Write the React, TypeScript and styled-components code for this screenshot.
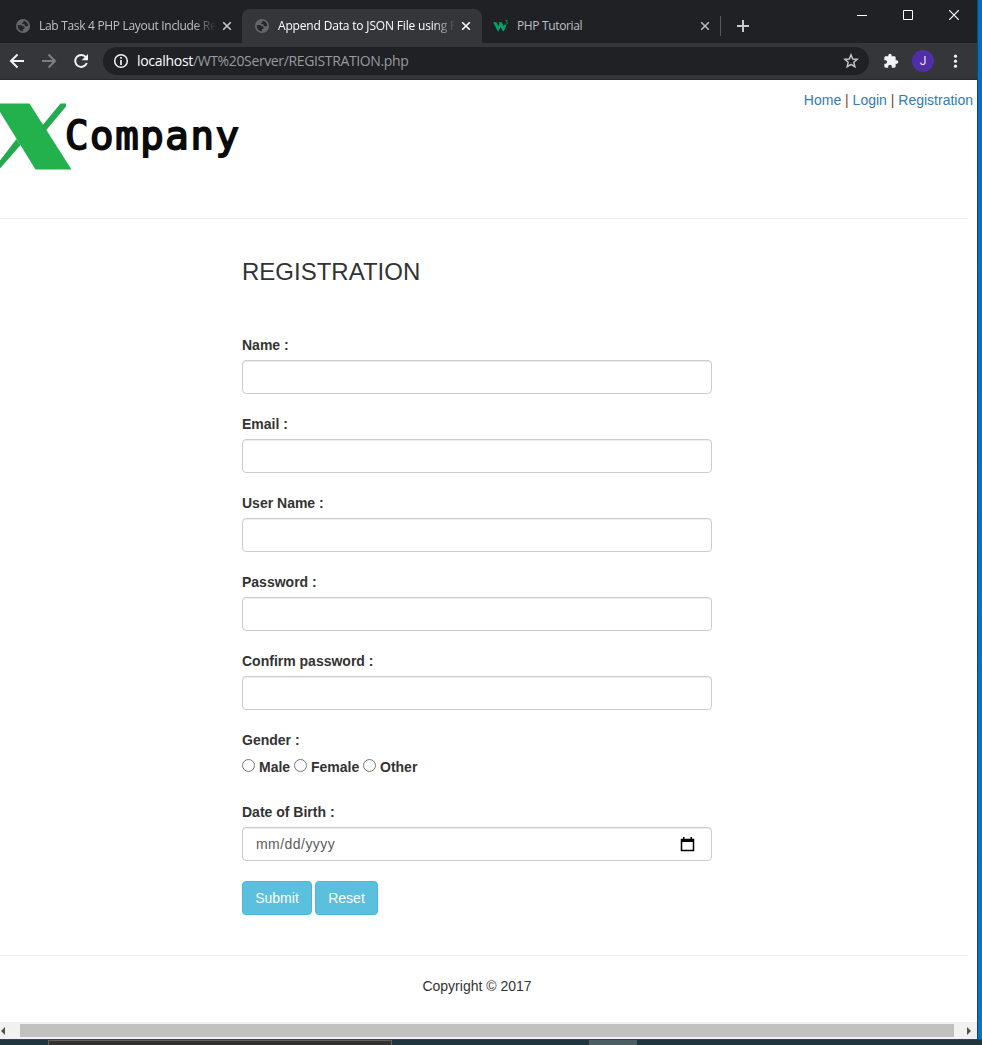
import React from "react";
import styled, { createGlobalStyle } from "styled-components";

const Global = createGlobalStyle`
  * { box-sizing: border-box; }
  html, body { margin: 0; padding: 0; overflow: hidden; }
  body { font-family: "Liberation Sans", Arial, sans-serif; font-size: 14px; line-height: 20px; color: #333; }
`;

const Desktop = styled.div`
  width: 982px;
  height: 1045px;
  display: flex;
  flex-direction: column;
  background: #1f363e;
  overflow: hidden;
`;
const Upper = styled.div`
  display: flex;
  height: 1039px;
`;
const Wallpaper = styled.div`
  width: 5px;
  border-left: 1px solid #1b4558;
  background: linear-gradient(#006fca, #0077c8);
`;
const Browser = styled.div`
  width: 977px;
  display: flex;
  flex-direction: column;
  background: #fff;
`;

const TabStrip = styled.div`
  height: 43px;
  display: flex;
  background: #202124;
`;
const Tab = styled.div<{ $active?: boolean; $width: number; $pad: number; $end?: number }>`
  width: ${(p) => p.$width}px;
  height: 34px;
  margin-top: 9px;
  padding-left: ${(p) => p.$pad}px;
  padding-right: ${(p) => p.$end ?? 10}px;
  display: flex;
  align-items: center;
  border-radius: 8px 8px 0 0;
  background: ${(p) => (p.$active ? "#35363a" : "#202124")};
  color: ${(p) => (p.$active ? "#fff" : "#bdc1c6")};
  font: 12px/16px "Open Sans", "Noto Sans", sans-serif;
  svg { flex: none; }
`;
const TabTitle = styled.span<{ $spacing: number; $fade?: boolean }>`
  flex: 1;
  min-width: 0;
  margin-left: 9px;
  margin-right: 6px;
  white-space: nowrap;
  letter-spacing: ${(p) => p.$spacing}px;
  ${(p) => p.$fade && "mask-image: linear-gradient(to right, #000 calc(100% - 22px), transparent);"}
`;
const TabDivider = styled.div`
  width: 1px;
  height: 20px;
  margin-top: 16px;
  background: #55575b;
`;
const NewTab = styled.div`
  margin: 20px 0 0 16px;
  height: 12px;
  line-height: 0;
`;
const WindowButtons = styled.div`
  margin-left: auto;
  padding: 10px 18px 0 0;
  display: flex;
  gap: 36px;
  height: 20px;
`;

const Toolbar = styled.div`
  height: 37px;
  display: flex;
  align-items: center;
  background: #35363a;
  border-bottom: 1px solid #28292c;
  padding-left: 9px;
  svg { flex: none; }
`;
const NavIcons = styled.div`
  display: flex;
  gap: 16px;
  width: 94px;
`;
const AddressBar = styled.div`
  width: 766px;
  height: 28px;
  border-radius: 14px;
  background: #202124;
  display: flex;
  align-items: center;
  padding: 0 10px;
`;
const Url = styled.span`
  flex: 1;
  margin-left: 8px;
  font: 14px/20px "Open Sans", "Noto Sans", sans-serif;
  letter-spacing: -0.37px;
  color: #969ba1;
  b { font-weight: 400; color: #fff; letter-spacing: -0.3px; }
`;
const Avatar = styled.div`
  width: 22px;
  height: 22px;
  margin: 0 13px 0 13px;
  border-radius: 50%;
  background: #512da8;
  color: #e8e3f5;
  text-align: center;
  font: 12px/22px Roboto, sans-serif;
`;
const Extensions = styled.svg`
  margin-left: 14px;
`;

const Page = styled.main`
  height: 942px;
  display: flex;
  flex-direction: column;
`;
const Header = styled.header`
  height: 138px;
  display: flex;
  justify-content: space-between;
  align-items: flex-start;
`;
const Brand = styled.div`
  display: flex;
  padding-top: 20px;
`;
const BrandName = styled.span`
  margin: 13px 0 0 -9px;
  font: 39px/46px "DejaVu Sans Mono", monospace;
  letter-spacing: 1.6px;
  -webkit-text-stroke: 1.8px #0a0a0a;
  color: #0a0a0a;
`;
const Links = styled.nav`
  padding: 10px 4px 0 0;
  white-space: pre;
  color: #8a3d2a;
  a { color: #337ab7; text-decoration: none; }
`;
const Rule = styled.hr`
  width: 968px;
  height: 1px;
  margin: 0;
  border: 0;
  background: #eee;
`;
const Form = styled.form`
  width: 470px;
  height: 736px;
  margin-left: 242px;
  padding-top: 40px;
`;
const Title = styled.h3`
  margin: 0 0 50px;
  font-size: 24px;
  line-height: 26px;
  font-weight: 400;
`;
const Group = styled.div<{ $gap?: number }>`
  margin-bottom: ${(p) => p.$gap ?? 20}px;
`;
const Label = styled.label`
  display: block;
  height: 20px;
  margin-bottom: 5px;
  font-weight: 700;
`;
const Input = styled.input`
  display: block;
  width: 100%;
  height: 34px;
  padding: 6px 12px;
  border: 1px solid #ccc;
  border-radius: 4px;
  background: #fff;
  box-shadow: inset 0 1px 1px rgba(0, 0, 0, 0.075);
`;
const DateBox = styled.div`
  display: flex;
  align-items: center;
  justify-content: space-between;
  height: 34px;
  padding: 0 16px 0 13px;
  border: 1px solid #ccc;
  border-radius: 4px;
  box-shadow: inset 0 1px 1px rgba(0, 0, 0, 0.075);
  color: #5c5c5c;
  letter-spacing: 0.45px;
`;
const Radios = styled.div`
  display: flex;
  height: 20px;
  margin-top: 7px;
  font-weight: 700;
`;
const Radio = styled.label<{ $width: number }>`
  display: flex;
  width: ${(p) => p.$width}px;
`;
const Circle = styled.span`
  width: 13px;
  height: 13px;
  margin: 2px 4px 0 0;
  border: 1px solid #767676;
  border-radius: 50%;
`;
const Actions = styled.div`
  display: flex;
  gap: 3px;
`;
const Button = styled.button<{ $width: number }>`
  width: ${(p) => p.$width}px;
  height: 34px;
  padding: 0;
  border: 1px solid #46b8da;
  border-radius: 4px;
  background: #5bc0de;
  color: #fff;
  font: 14px/20px "Liberation Sans", Arial, sans-serif;
`;
const Footer = styled.footer`
  width: 954px;
  padding-top: 20px;
  text-align: center;
`;

const ScrollBar = styled.div`
  height: 17px;
  display: flex;
  align-items: center;
  justify-content: space-between;
  padding: 0 6px 0 1px;
  background: #f1f1f1;
`;
const Thumb = styled.div`
  width: 934px;
  height: 13px;
  margin-left: 15px;
  margin-right: auto;
  background: #c1c1c1;
`;
const Taskbar = styled.div`
  height: 6px;
  display: flex;
  padding-left: 48px;
  border-top: 1px solid #1f4e5b;
`;
const TaskSearch = styled.div`
  width: 344px;
  border: 1px solid #656461;
  border-bottom: 0;
  background: #333230;
`;
const TaskApp = styled.div`
  width: 48px;
  margin-left: 197px;
  background: #4c5e64;
`;

const Globe = () => (
  <svg width="14" height="14" viewBox="0 0 14 14">
    <circle cx="7" cy="7" r="7" fill="#63666b" />
    <path d="M1.8 6h3.600l1.200 1.200 1.900.3v1.900L7 10.200v2C4 12.200 1.800 10 1.800 7.200zM7.300 1.800c2.500 0 4.800 2.200 4.900 5l-1.700.7-1.600-.8-.4-1.300-2.300-.4.1-1.600 1.500-.3z" fill="#26272a" />
  </svg>
);
const Close = ({ color }: { color: string }) => (
  <svg width="10" height="10" viewBox="0 0 10 10">
    <path d="M1.2 1.2 8.8 8.8M8.8 1.2 1.2 8.8" stroke={color} strokeWidth="1.6" />
  </svg>
);

const fields = ["Name :", "Email :", "User Name :", "Password :", "Confirm password :"];

export default function App() {
  return (
    <Desktop>
      <Global />
      <Upper>
        <Browser>
          <TabStrip>
            <Tab $width={242} $pad={16}>
              <Globe />
              <TabTitle $spacing={-0.31} $fade>Lab Task 4 PHP Layout Include Re</TabTitle>
              <Close color="#c4c7ca" />
            </Tab>
            <Tab $active $width={240} $pad={13} $end={11}>
              <Globe />
              <TabTitle $spacing={-0.17} $fade>Append Data to JSON File using P</TabTitle>
              <Close color="#fff" />
            </Tab>
            <Tab $width={238} $pad={10}>
              <svg width="16" height="14" viewBox="0 0 16 14">
                <path d="M1.200 3.200h3.300l1.700 4 1.300-2.300-.7-1.700h3l1.800 4 1-2 1.700 1.500-2.600 5.500h-.7L8.500 8.100l-2 4.100h-.7z" fill="#04a56b" />
                <path d="M13.300 1.400h2.100l-1.100 1.400c1.900.2 1.500 2.500-.2 2.400-.5 0-.9-.2-1.100-.5" fill="none" stroke="#078458" />
              </svg>
              <TabTitle $spacing={-0.36}>PHP Tutorial</TabTitle>
              <Close color="#b6b9bd" />
            </Tab>
            <TabDivider />
            <NewTab>
              <svg width="12" height="12"><path d="M6 0v12M0 6h12" stroke="#c8cacc" strokeWidth="2" /></svg>
            </NewTab>
            <WindowButtons>
              <svg width="10" height="10"><path d="M0 5.5h10" stroke="#fff" /></svg>
              <svg width="10" height="10"><path d="M.5.5h9v9h-9z" fill="none" stroke="#fff" /></svg>
              <svg width="10" height="10"><path d="m0 0 10 10M10 0 0 10" stroke="#fff" strokeWidth="1.2" /></svg>
            </WindowButtons>
          </TabStrip>
          <Toolbar>
            <NavIcons>
              <svg width="16" height="16"><path d="M15 8H2M8.5 1.5 2 8l6.5 6.5" fill="none" stroke="#f1f3f4" strokeWidth="2" /></svg>
              <svg width="16" height="16"><path d="M1 8h13M7.5 1.5 14 8l-6.5 6.5" fill="none" stroke="#7c7e82" strokeWidth="2" /></svg>
              <svg width="16" height="16">
                <path d="M13 4.3A6 6 0 1 0 13.8 10" fill="none" stroke="#f1f3f4" strokeWidth="2" />
                <path d="M15 1v6.3H8.7z" fill="#f1f3f4" />
              </svg>
            </NavIcons>
            <AddressBar>
              <svg width="16" height="16">
                <circle cx="8" cy="8" r="6.3" fill="none" stroke="#f1f3f4" strokeWidth="1.5" />
                <path d="M8 4v1.7M8 7v5" stroke="#f1f3f4" strokeWidth="1.7" />
              </svg>
              <Url><b>localhost</b>/WT%20Server/REGISTRATION.php</Url>
              <svg width="16" height="16" viewBox="0 0 16 16">
                <path d="m8 1.8 1.7 4.2 4.5.4-3.4 2.9 1.1 4.4L8 11.4l-3.9 2.3 1.1-4.4-3.4-2.9 4.5-.4z" fill="none" stroke="#c8cacc" strokeWidth="1.4" />
              </svg>
            </AddressBar>
            <Extensions width="16" height="16" viewBox="0 0 24 24">
              <path fill="#f1f3f4" d="M20.5 11H19V7c0-1.1-.9-2-2-2h-4V3.5a2.5 2.5 0 0 0-5 0V5H4c-1.1 0-2 .9-2 2v3.8h1.5a2.7 2.7 0 0 1 0 5.4H2V20c0 1.1.9 2 2 2h3.8v-1.5a2.7 2.7 0 0 1 5.4 0V22H17c1.1 0 2-.9 2-2v-4h1.5a2.5 2.5 0 0 0 0-5z" />
            </Extensions>
            <Avatar>J</Avatar>
            <svg width="16" height="16">
              <g fill="#f1f3f4"><circle cx="8.500" cy="3.200" r="1.600" /><circle cx="8.500" cy="8.200" r="1.600" /><circle cx="8.500" cy="13.200" r="1.600" /></g>
            </svg>
          </Toolbar>
          <Page>
            <Header>
              <Brand>
                <svg width="74" height="72" viewBox="0 0 74 72">
                  <path d="M0 3.500H29.500L71.500 69.500H35.500L0 12z" fill="#23b14d" />
                  <path d="M60.500 3.500h5.500v3L45.500 31l-4-4.500zM16.500 39 0 60.500v8l20.500-23.500z" fill="#23a94f" />
                </svg>
                <BrandName>Company</BrandName>
              </Brand>
              <Links><a>Home</a> | <a>Login</a> | <a>Registration</a></Links>
            </Header>
            <Rule />
            <Form>
              <Title>REGISTRATION</Title>
              {fields.map((f) => (
                <Group key={f}>
                  <Label>{f}</Label>
                  <Input />
                </Group>
              ))}
              <Group $gap={25}>
                <Label>Gender :</Label>
                <Radios>
                  <Radio $width={52}><Circle />Male</Radio>
                  <Radio $width={69}><Circle />Female</Radio>
                  <Radio $width={60}><Circle />Other</Radio>
                </Radios>
              </Group>
              <Group>
                <Label>Date of Birth :</Label>
                <DateBox>
                  mm/dd/yyyy
                  <svg width="15" height="16" viewBox="0 0 15 16">
                    <path d="M1.500 3.500h12v11h-12z" fill="none" stroke="#000" strokeWidth="1.500" />
                    <path d="M1 3h13v3H1zM3 1h1.500v2H3zM10.500 1H12v2h-1.500z" />
                  </svg>
                </DateBox>
              </Group>
              <Actions>
                <Button type="button" $width={70}>Submit</Button>
                <Button type="button" $width={63}>Reset</Button>
              </Actions>
            </Form>
            <Rule />
            <Footer>Copyright © 2017</Footer>
          </Page>
          <ScrollBar>
            <svg width="4" height="8"><path d="M4 0v8L0 4z" fill="#505050" /></svg>
            <Thumb />
            <svg width="4" height="8"><path d="M0 0v8l4-4z" fill="#505050" /></svg>
          </ScrollBar>
        </Browser>
        <Wallpaper />
      </Upper>
      <Taskbar>
        <TaskSearch />
        <TaskApp />
      </Taskbar>
    </Desktop>
  );
}
